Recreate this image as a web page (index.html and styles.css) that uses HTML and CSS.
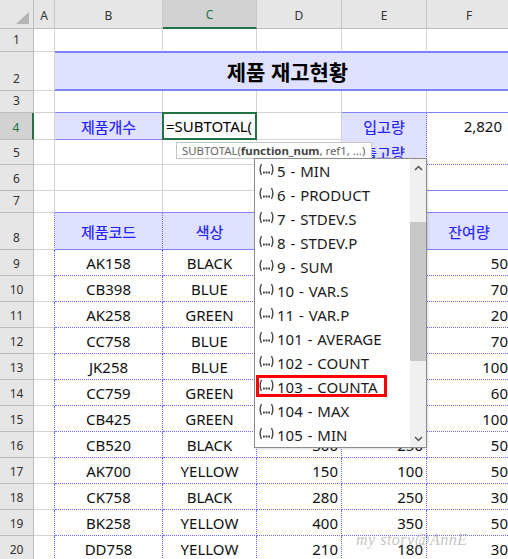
FILE: index.html
```html
<!DOCTYPE html>
<html lang="ko">
<head>
    <meta charset="UTF-8">
    <title>제품 재고현황</title>
    <link rel="stylesheet" href="styles.css">
</head>
<body>
    <svg class="defs" width="0" height="0">
        <symbol id="fx" viewBox="0 0 17 13">
            <path d="M3.5 1 Q0.8 6.5 3.5 12" fill="none" stroke="#444" stroke-width="1.3"/>
            <path d="M13.5 1 Q16.2 6.5 13.5 12" fill="none" stroke="#444" stroke-width="1.3"/>
            <rect x="5" y="8.5" width="1.8" height="2" fill="#444"/>
            <rect x="7.6" y="8.5" width="1.8" height="2" fill="#444"/>
            <rect x="10.2" y="8.5" width="1.8" height="2" fill="#444"/>
        </symbol>
    </svg>

    <div class="sheet">
        <div class="grid">
            <!-- column headers -->
            <div class="c corner">
                <svg width="14" height="13" viewBox="0 0 14 13"><polygon points="13,0 13,12 0,12" fill="#b4b4b4"/></svg>
            </div>
            <div class="c ch">A</div>
            <div class="c ch">B</div>
            <div class="c ch sel">C</div>
            <div class="c ch">D</div>
            <div class="c ch">E</div>
            <div class="c ch">F</div>

            <!-- 1 -->
            <div class="c rh">1</div>
            <div class="c"></div>
            <div class="c bb"></div>
            <div class="c bb"></div>
            <div class="c bb"></div>
            <div class="c bb"></div>
            <div class="c bb"></div>

            <!-- 2 -->
            <div class="c rh">2</div>
            <div class="c"></div>
            <div class="c title">제품 재고현황</div>

            <!-- 3 -->
            <div class="c rh">3</div>
            <div class="c"></div>
            <div class="c bb"></div>
            <div class="c"></div>
            <div class="c"></div>
            <div class="c bb"></div>
            <div class="c bb"></div>

            <!-- 4 -->
            <div class="c rh sel">4</div>
            <div class="c"></div>
            <div class="c lav bb">제품개수</div>
            <div class="c active">=SUBTOTAL(<span class="cursor"></span></div>
            <div class="c"></div>
            <div class="c lav rd nb">입고량</div>
            <div class="c num wb total">2,820</div>

            <!-- 5 -->
            <div class="c rh">5</div>
            <div class="c"></div>
            <div class="c"></div>
            <div class="c"></div>
            <div class="c"></div>
            <div class="c lav rd bb">출고량</div>
            <div class="c bd"></div>

            <!-- 6 -->
            <div class="c rh">6</div>
            <div class="c"></div>
            <div class="c"></div>
            <div class="c"></div>
            <div class="c"></div>
            <div class="c bb"></div>
            <div class="c bb"></div>

            <!-- 7 -->
            <div class="c rh">7</div>
            <div class="c"></div>
            <div class="c bb"></div>
            <div class="c bb"></div>
            <div class="c bb"></div>
            <div class="c bb"></div>
            <div class="c bb"></div>

            <!-- 8 (D and E headings sit under the function list) -->
            <div class="c rh">8</div>
            <div class="c rd"></div>
            <div class="c lav rd bb">제품코드</div>
            <div class="c lav rd bb">색상</div>
            <div class="c lav rd bb"></div>
            <div class="c lav rd bb"></div>
            <div class="c lav bb">잔여량</div>

            <!-- 9 -->
            <div class="c rh">9</div><div class="c rd"></div>
            <div class="c ctr rd bd">AK158</div><div class="c ctr rd bd">BLACK</div>
            <div class="c num rd bd"></div><div class="c num rd bd"></div><div class="c num bd">50</div>
            <!-- 10 -->
            <div class="c rh">10</div><div class="c rd"></div>
            <div class="c ctr rd bd">CB398</div><div class="c ctr rd bd">BLUE</div>
            <div class="c num rd bd"></div><div class="c num rd bd"></div><div class="c num bd">70</div>
            <!-- 11 -->
            <div class="c rh">11</div><div class="c rd"></div>
            <div class="c ctr rd bd">AK258</div><div class="c ctr rd bd">GREEN</div>
            <div class="c num rd bd"></div><div class="c num rd bd"></div><div class="c num bd">20</div>
            <!-- 12 -->
            <div class="c rh">12</div><div class="c rd"></div>
            <div class="c ctr rd bd">CC758</div><div class="c ctr rd bd">BLUE</div>
            <div class="c num rd bd"></div><div class="c num rd bd"></div><div class="c num bd">70</div>
            <!-- 13 -->
            <div class="c rh">13</div><div class="c rd"></div>
            <div class="c ctr rd bd">JK258</div><div class="c ctr rd bd">BLUE</div>
            <div class="c num rd bd"></div><div class="c num rd bd"></div><div class="c num bd">100</div>
            <!-- 14 -->
            <div class="c rh">14</div><div class="c rd"></div>
            <div class="c ctr rd bd">CC759</div><div class="c ctr rd bd">GREEN</div>
            <div class="c num rd bd"></div><div class="c num rd bd"></div><div class="c num bd">60</div>
            <!-- 15 -->
            <div class="c rh">15</div><div class="c rd"></div>
            <div class="c ctr rd bd">CB425</div><div class="c ctr rd bd">GREEN</div>
            <div class="c num rd bd"></div><div class="c num rd bd"></div><div class="c num bd">100</div>
            <!-- 16 -->
            <div class="c rh">16</div><div class="c rd"></div>
            <div class="c ctr rd bd">CB520</div><div class="c ctr rd bd">BLACK</div>
            <div class="c num rd bd">300</div><div class="c num rd bd">250</div><div class="c num bd">50</div>
            <!-- 17 -->
            <div class="c rh">17</div><div class="c rd"></div>
            <div class="c ctr rd bd">AK700</div><div class="c ctr rd bd">YELLOW</div>
            <div class="c num rd bd">150</div><div class="c num rd bd">100</div><div class="c num bd">50</div>
            <!-- 18 -->
            <div class="c rh">18</div><div class="c rd"></div>
            <div class="c ctr rd bd">CK758</div><div class="c ctr rd bd">BLACK</div>
            <div class="c num rd bd">280</div><div class="c num rd bd">250</div><div class="c num bd">30</div>
            <!-- 19 -->
            <div class="c rh">19</div><div class="c rd"></div>
            <div class="c ctr rd bd">BK258</div><div class="c ctr rd bd">YELLOW</div>
            <div class="c num rd bd">400</div><div class="c num rd bd">350</div><div class="c num bd">50</div>
            <!-- 20 -->
            <div class="c rh">20</div><div class="c rd"></div>
            <div class="c ctr rd bd">DD758</div><div class="c ctr rd bd">YELLOW</div>
            <div class="c num rd bd">210</div><div class="c num rd bd">180</div><div class="c num bd">30</div>
        </div>

        <!-- formula hint + function list -->
        <div class="tip">SUBTOTAL(<b>function_num</b>, ref1, ...)</div>

        <div class="list">
            <div class="item"><svg class="fx"><use href="#fx"/></svg>5 - MIN</div>
            <div class="item"><svg class="fx"><use href="#fx"/></svg>6 - PRODUCT</div>
            <div class="item"><svg class="fx"><use href="#fx"/></svg>7 - STDEV.S</div>
            <div class="item"><svg class="fx"><use href="#fx"/></svg>8 - STDEV.P</div>
            <div class="item"><svg class="fx"><use href="#fx"/></svg>9 - SUM</div>
            <div class="item"><svg class="fx"><use href="#fx"/></svg>10 - VAR.S</div>
            <div class="item"><svg class="fx"><use href="#fx"/></svg>11 - VAR.P</div>
            <div class="item"><svg class="fx"><use href="#fx"/></svg>101 - AVERAGE</div>
            <div class="item"><svg class="fx"><use href="#fx"/></svg>102 - COUNT</div>
            <div class="item"><svg class="fx"><use href="#fx"/></svg>103 - COUNTA</div>
            <div class="item"><svg class="fx"><use href="#fx"/></svg>104 - MAX</div>
            <div class="item"><svg class="fx"><use href="#fx"/></svg>105 - MIN</div>

            <div class="scroll">
                <svg class="arrow up" width="9" height="6" viewBox="0 0 9 6"><polyline points="1,5 4.5,1.5 8,5" fill="none" stroke="#555" stroke-width="1.5"/></svg>
                <div class="thumb"></div>
                <svg class="arrow down" width="9" height="6" viewBox="0 0 9 6"><polyline points="1,1 4.5,4.5 8,1" fill="none" stroke="#555" stroke-width="1.5"/></svg>
            </div>
        </div>

        <div class="mark"></div>
        <div class="watermark">my story@AnnE</div>
    </div>
</body>
</html>
```

FILE: styles.css
```css
body {
    margin: 0;
    background: #fff;
    font-family: "Noto Sans", "Noto Sans CJK KR", sans-serif;
    overflow: hidden;
}
.defs {
    position: absolute;
}
.sheet {
    position: relative;
    width: 508px;
    height: 559px;
    overflow: hidden;
}
.grid {
    display: grid;
    grid-template-columns: 34px 21px 108px 94px 85px 85px 85px;
    grid-template-rows: 29px 23px 39px 22px 27px 25px 26px 22px 37px repeat(12, 26px);
    width: 512px;
}
.c {
    box-sizing: border-box;
    border-right: 1px solid #d4d4d4;
    border-bottom: 1px solid #d4d4d4;
    display: flex;
    align-items: center;
    padding: 0 3px;
    font-size: 15px;
    color: #111;
    white-space: nowrap;
    overflow: hidden;
}

/* headers */
.corner {
    background: #e6e6e6;
    border-color: #bdbdbd;
    justify-content: flex-end;
    align-items: flex-end;
    padding: 0 3px 3px 0;
}
.ch {
    background: #e6e6e6;
    border-bottom-color: #bdbdbd;
    border-right-color: #c8c8c8;
    justify-content: center;
    font-size: 12px;
    color: #333;
    padding-top: 2px;
}
.rh {
    background: #e6e6e6;
    border-right-color: #bdbdbd;
    border-bottom-color: #bdbdbd;
    justify-content: center;
    align-items: flex-end;
    font-size: 12px;
    line-height: 14px;
    color: #333;
    padding-bottom: 4px;
}
.ch.sel {
    background: #d2d2d2;
    border-bottom: 2px solid #217346;
    color: #217346;
}
.rh.sel {
    background: #d2d2d2;
    border-right: 2px solid #217346;
    color: #217346;
}

/* cell styles */
.title {
    grid-column: 3 / 8;
    background: #e0e0ff;
    border-top: 1px solid #8080ff;
    border-bottom: 2px solid #8080ff;
    justify-content: center;
    font-size: 21px;
    font-weight: bold;
    color: #000;
    padding-left: 12px;
}
.lav {
    background: #e0e0ff;
    color: #2222ff;
    justify-content: center;
    -webkit-text-stroke: 0.2px #2222ff;
}
.bb {
    border-bottom: 1px solid #8080ff;
}
.bd {
    border-bottom: 1px dotted #6a6aff;
}
.rd {
    border-right: 1px dotted #6a6aff;
}
.nb {
    border-bottom-color: #e0e0ff;
}
.wb {
    border-bottom-color: #fff;
}
.ctr {
    justify-content: center;
}
.num {
    justify-content: flex-end;
}
.total {
    padding-right: 9px;
}
.active {
    position: relative;
    overflow: visible;
    color: #000;
    padding-left: 3px;
}
.active::after {
    content: "";
    position: absolute;
    top: -1px;
    left: -1px;
    right: -1px;
    bottom: -1px;
    border: 2px solid #217346;
}
.cursor {
    display: inline-block;
    width: 1px;
    height: 18px;
    background: #000;
    margin-left: 1px;
}

/* formula tooltip */
.tip {
    position: absolute;
    left: 176px;
    top: 142px;
    width: 196px;
    height: 17px;
    box-sizing: border-box;
    border: 1px solid #c6c6c6;
    background: #fff;
    font-size: 11.4px;
    line-height: 15px;
    color: #666;
    padding-left: 5px;
    white-space: nowrap;
    overflow: hidden;
}
.tip b {
    color: #444;
}

/* function list */
.list {
    position: absolute;
    left: 254px;
    top: 158px;
    width: 173px;
    height: 290px;
    box-sizing: border-box;
    border: 1px solid #8c8c8c;
    background: #fff;
    box-shadow: 1px 1px 2px rgba(0, 0, 0, 0.15);
}
.item {
    height: 24px;
    display: flex;
    align-items: center;
    padding-left: 3px;
    font-size: 15px;
    word-spacing: 1px;
    color: #1a1a1a;
    white-space: nowrap;
}
.fx {
    width: 17px;
    height: 13px;
    margin-right: 2px;
    margin-top: -3px;
}
.scroll {
    position: absolute;
    top: 0;
    right: 0;
    width: 16px;
    height: 100%;
    background: #f0f0f0;
}
.arrow {
    position: absolute;
    left: 4px;
}
.arrow.up {
    top: 6px;
}
.arrow.down {
    bottom: 5px;
}
.thumb {
    position: absolute;
    top: 63px;
    left: 0;
    width: 16px;
    height: 139px;
    background: #c8c8c8;
}

/* highlight box */
.mark {
    position: absolute;
    left: 256px;
    top: 375px;
    width: 131px;
    height: 22px;
    box-sizing: border-box;
    border: 3px solid #f00;
}

.watermark {
    position: absolute;
    left: 356px;
    top: 531px;
    font-family: "Liberation Serif", serif;
    font-style: italic;
    font-size: 16px;
    letter-spacing: 0.5px;
    color: rgba(140, 140, 140, 0.55);
}
```
